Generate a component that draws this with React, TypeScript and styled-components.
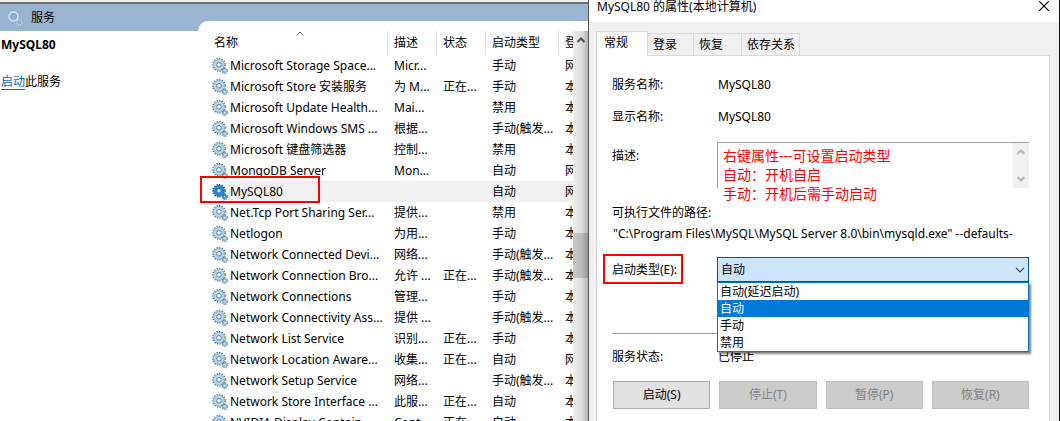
import React, { useState } from 'react';
import styled, { createGlobalStyle, css } from 'styled-components';

const GlobalStyle = createGlobalStyle`
  * { box-sizing: border-box; }
  html, body { margin: 0; height: 100%; overflow: hidden; }
  #root { height: 100%; }
  body, button, input, select, textarea, table {
    font-family: "Noto Sans", "Noto Sans CJK SC", sans-serif;
    font-size: 12px;
    line-height: 16px;
    color: #000;
  }
`;

const Desktop = styled.main`
  display: grid;
  grid-template-columns: minmax(0, 5fr) minmax(472px, 4fr);
  height: 100vh;
  overflow: hidden;
  background: #fff;
`;

/* ---------- services console ---------- */

const Console = styled.section`
  display: flex;
  flex-direction: column;
  min-width: 0;
  overflow: hidden;
  background: #fff;
`;

const ToolbarEdge = styled.div`
  flex: none;
  height: 4px;
  background: #f0f0f0;
  border-bottom: 2px solid #6e6e6e;
`;

const ConsoleBody = styled.div`
  display: grid;
  grid-template-columns: 198px minmax(0, 1fr);
  flex: 1;
  min-height: 0;
`;

const DetailPane = styled.aside`
  min-width: 0;
`;

const PaneTitle = styled.h1`
  display: flex;
  align-items: center;
  gap: 8px;
  height: 27px;
  margin: 0;
  padding-left: 7px;
  background: #99b4d1;
  font-size: 12px;
  font-weight: 400;
`;

const ServiceName = styled.h2`
  margin: 6px 0 21px;
  padding-left: 1px;
  font-size: 12px;
  font-weight: 700;
`;

const ServiceAction = styled.p`
  margin: 0;
  padding-left: 1px;
`;

const ActionLink = styled.a`
  color: #0066cc;
  text-decoration: underline;
  text-underline-offset: 3px;
`;

const ListPane = styled.div`
  display: flex;
  min-width: 0;
  min-height: 0;
  padding-top: 17px;
  background: #99b4d1;
`;

const ListSheet = styled.div`
  display: grid;
  grid-template-columns: minmax(0, 1fr) 15px;
  flex: 1;
  min-width: 0;
  padding-top: 10px;
  background: #fff;
  border-top-left-radius: 10px;
  overflow: hidden;
`;

const TableClip = styled.div`
  min-width: 0;
  padding-left: 14px;
  overflow: hidden;
`;

const ServiceTable = styled.table`
  width: 100%;
  table-layout: fixed;
  border-collapse: separate;
  border-spacing: 0;
`;

const HeadCell = styled.th<{ $first?: boolean }>`
  position: relative;
  height: 24px;
  padding: 0 0 0 ${p => (p.$first ? 2 : 6)}px;
  border-right: 1px solid #dedede;
  font-weight: 400;
  text-align: left;
  white-space: nowrap;
  overflow: hidden;
  &:last-child { border-right: 0; }
`;

const SortMark = styled.svg`
  position: absolute;
  top: 0;
  left: 50%;
  margin-left: -4px;
`;

const Row = styled.tr<{ $selected?: boolean }>`
  ${p => p.$selected && css`td { background: #f0f0f0; }`}
`;

const Cell = styled.td`
  height: 21px;
  padding: 0 0 0 6px;
  white-space: nowrap;
  overflow: hidden;
`;

const NameCell = styled(Cell)<{ $selected?: boolean }>`
  position: relative;
  padding: 0;
  overflow: visible;
  ${p => p.$selected && css`&& { background: linear-gradient(90deg, #fff 16px, #f0f0f0 16px); }`}
`;

const NameContent = styled.div`
  display: flex;
  align-items: center;
  gap: 2px;
`;

const Highlight = styled.span`
  position: absolute;
  border: 2px solid #f00;
  pointer-events: none;
`;

const RowHighlight = styled(Highlight)`
  top: -5px;
  left: -12px;
  width: 120px;
  height: 27px;
`;

const ScrollTrack = styled.div`
  display: flex;
  flex-direction: column;
  align-items: stretch;
  background: linear-gradient(90deg, #eee, #dadada 60%, #b4b4b4);
`;

const ScrollArrow = styled.span`
  display: flex;
  justify-content: center;
  height: 202px;
  padding-top: 6px;
`;

const ScrollThumb = styled.span`
  height: 45px;
  background: linear-gradient(90deg, #c8c8c8, #bababa 60%, #989898);
`;

/* ---------- properties dialog ---------- */

const Dialog = styled.section`
  display: flex;
  flex-direction: column;
  min-width: 0;
  background: #f0f0f0;
  border-left: 1px solid #555;
  border-right: 1px solid #111;
`;

const TitleBar = styled.header`
  display: flex;
  justify-content: space-between;
  align-items: flex-start;
  height: 22px;
  padding: 0 10px 0 8px;
  background: #fff;
`;

const DialogTitle = styled.h2`
  margin: -1px 0 0;
  font-size: 12px;
  font-weight: 400;
`;

const CloseButton = styled.button`
  display: flex;
  padding: 1px 0 0;
  border: 0;
  background: none;
`;

const Tabs = styled.div`
  display: flex;
  align-items: flex-end;
  height: 33px;
  padding: 9px 7px 0;
`;

const Tab = styled.button<{ $active?: boolean; $width: number }>`
  width: ${p => p.$width}px;
  height: 22px;
  padding: 0 5px;
  border: 1px solid #d9d9d9;
  border-width: 1px 1px 0 0;
  background: #f0f0f0;
  text-align: left;
  white-space: nowrap;
  ${p => p.$active && css`
    height: 25px;
    margin-bottom: -1px;
    padding: 0 7px 2px;
    border-left-width: 1px;
    background: #fff;
    z-index: 1;
  `}
`;

const TabPage = styled.form`
  flex: 1;
  min-height: 0;
  margin: 0 9px 0 7px;
  padding: 13px 20px 0 15px;
  border: 1px solid #d9d9d9;
  border-bottom: 0;
  background: #fff;
`;

const Field = styled.div<{ $height: number }>`
  display: grid;
  grid-template-columns: 105px minmax(0, 1fr);
  align-items: center;
  height: ${p => p.$height}px;
`;

const DescriptionField = styled(Field)`
  align-items: start;
  padding-top: 9px;
`;

const DescriptionLabel = styled.label`
  padding-top: 6px;
`;

const PlainInput = styled.input`
  width: 100%;
  height: 16px;
  padding: 0 0 0 1px;
  border: 0;
  outline: 0;
  background: transparent;
`;

const DescriptionBox = styled.div`
  position: relative;
  display: grid;
  grid-template-columns: minmax(0, 1fr) 16px;
  height: 46px;
  border: 1px solid #a0a0a0;
  border-width: 1px 0 0 1px;
`;

const Description = styled.textarea`
  height: 100%;
  border: 0;
  outline: 0;
  resize: none;
  background: #fff;
`;

const MiniScroll = styled.div`
  display: flex;
  flex-direction: column;
  align-items: center;
  justify-content: space-between;
  padding: 6px 0;
  background: #f0f0f0;
`;

const Note = styled.p`
  position: absolute;
  top: 3px;
  left: 5px;
  margin: 0;
  color: #f00;
  font-size: 14px;
  line-height: 19px;
  white-space: pre-line;
  pointer-events: none;
`;

const PathBlock = styled.div`
  padding-top: 16px;
`;

const PathLabel = styled.label`
  display: block;
  margin-bottom: 5px;
`;

const StartupField = styled(Field)`
  position: relative;
  margin-top: 15px;
`;

const LabelHighlight = styled(Highlight)`
  top: -3px;
  left: -9px;
  width: 80px;
  height: 30px;
`;

const Combo = styled.div`
  position: relative;
  display: flex;
  align-items: center;
`;

const StartupSelect = styled.select`
  width: 100%;
  height: 25px;
  padding: 0 3px;
  appearance: none;
  border: 1px solid #005499;
  border-radius: 0;
  outline: 0;
  background: #cce4f7;
`;

const ComboArrow = styled.svg`
  position: absolute;
  right: 4px;
  pointer-events: none;
`;

const Options = styled.ul`
  position: absolute;
  z-index: 2;
  top: 25px;
  left: 0;
  right: 0;
  margin: 0;
  padding: 0;
  border: 1px solid #0078d7;
  background: #fff;
  box-shadow: 2px 2px 2px rgba(0, 0, 0, 0.5);
  list-style: none;
`;

const Option = styled.li<{ $selected: boolean }>`
  height: 17px;
  padding: 1px 0 0 2px;
  color: ${p => (p.$selected ? '#fff' : '#000')};
  background: ${p => (p.$selected ? '#0078d7' : '#fff')};
`;

const Divider = styled.hr`
  height: 1px;
  margin: 51px 0 15px;
  border: 0;
  background: #a0a0a0;
`;

const ButtonRow = styled.div`
  display: grid;
  grid-template-columns: repeat(4, minmax(0, 1fr));
  gap: 9px;
  padding: 16px 0 0 1px;
`;

const CommandButton = styled.button`
  height: 28px;
  padding: 0;
  border: 1px solid #adadad;
  background: #e1e1e1;
  &:disabled {
    border-color: #bfbfbf;
    background: #ccc;
    color: #838383;
  }
`;

/* ---------- drawings ---------- */

const GearIcon = ({ dark }: { dark?: boolean }) => (
  <svg width="16" height="16" viewBox="0 0 16 16" fill="none" aria-hidden="true">
    <circle cx="7" cy="6.8" r="6.1" stroke={dark ? '#1767a8' : '#55758f'} strokeWidth="1.6" strokeDasharray="1.3 1.25" />
    <circle cx="7" cy="6.8" r="4" stroke={dark ? '#2e8ad0' : '#b5d8ef'} strokeWidth="3.2" />
    <circle cx="7" cy="6.8" r="5.3" stroke={dark ? '#1f74b8' : '#7fa6c2'} strokeWidth="0.7" />
    <circle cx="7" cy="6.8" r="2.3" fill={dark ? '#d9ecfa' : '#fff'} stroke={dark ? '#155d99' : '#54789a'} strokeWidth="1" />
    <circle cx="12.8" cy="12.8" r="2.6" stroke={dark ? '#1767a8' : '#55758f'} strokeWidth="1.2" strokeDasharray="1.1 0.94" />
    <circle cx="12.8" cy="12.8" r="1.5" fill="#fff" stroke={dark ? '#2e8ad0' : '#8fb8d6'} strokeWidth="1.6" />
  </svg>
);

const TitleGear = () => (
  <svg width="16" height="16" viewBox="0 0 16 16" fill="none" aria-hidden="true">
    <circle cx="6.5" cy="6.5" r="5.6" stroke="#89a9bd" strokeWidth="1.4" strokeDasharray="1.4 1.53" />
    <circle cx="6.5" cy="6.5" r="4.4" stroke="#c4e3f2" strokeWidth="2" />
    <circle cx="6.5" cy="6.5" r="3.1" fill="#92b1d3" stroke="#7ea0b8" strokeWidth="0.6" />
    <circle cx="12.5" cy="12.5" r="2.4" stroke="#bcdcea" strokeWidth="1.6" strokeDasharray="1.1 0.78" />
    <circle cx="12.5" cy="12.5" r="1.4" stroke="#86a9c0" strokeWidth="0.8" />
  </svg>
);

const Chevron = ({ up, color, weight = 1 }: { up?: boolean; color: string; weight?: number }) => (
  <svg width="10" height="6" viewBox="0 0 10 6" fill="none" aria-hidden="true">
    <path d={up ? 'M1.5 5 5 1.5 8.5 5' : 'M1.5 1 5 4.5 8.5 1'} stroke={color} strokeWidth={weight} />
  </svg>
);

/* ---------- data ---------- */

const services: string[][] = [
  ['Microsoft Storage Space...', 'Micr...', '', '手动', '网'],
  ['Microsoft Store 安装服务', '为 M...', '正在...', '手动', '本'],
  ['Microsoft Update Health...', 'Mai...', '', '禁用', '本'],
  ['Microsoft Windows SMS ...', '根据...', '', '手动(触发...', '本'],
  ['Microsoft 键盘筛选器', '控制...', '', '禁用', '本'],
  ['MongoDB Server', 'Mon...', '', '自动', '网'],
  ['MySQL80', '', '', '自动', '网'],
  ['Net.Tcp Port Sharing Ser...', '提供...', '', '禁用', '本'],
  ['Netlogon', '为用...', '', '手动', '本'],
  ['Network Connected Devi...', '网络...', '', '手动(触发...', '本'],
  ['Network Connection Bro...', '允许 ...', '正在...', '手动(触发...', '本'],
  ['Network Connections', '管理...', '', '手动', '本'],
  ['Network Connectivity Ass...', '提供 ...', '', '手动(触发...', '本'],
  ['Network List Service', '识别...', '正在...', '手动', '本'],
  ['Network Location Aware...', '收集...', '正在...', '自动', '网'],
  ['Network Setup Service', '网络...', '', '手动(触发...', '本'],
  ['Network Store Interface ...', '此服...', '正在...', '自动', '本'],
  ['NVIDIA Display Contain...', 'Cont...', '正在...', '自动', '本'],
];

const startupTypes = ['自动(延迟启动)', '自动', '手动', '禁用'];
const selectedService = 'MySQL80';

export default function App() {
  const [startup, setStartup] = useState('自动');

  return (
    <>
      <GlobalStyle />
      <Desktop>
        <Console>
          <ToolbarEdge />
          <ConsoleBody>
            <DetailPane>
              <PaneTitle><TitleGear />服务</PaneTitle>
              <ServiceName>{selectedService}</ServiceName>
              <ServiceAction><ActionLink href="#start">启动</ActionLink>此服务</ServiceAction>
            </DetailPane>
            <ListPane>
              <ListSheet>
                <TableClip>
                  <ServiceTable>
                    <colgroup>
                      <col />
                      <col width="49" />
                      <col width="49" />
                      <col width="73" />
                      <col width="14" />
                    </colgroup>
                    <thead>
                      <tr>
                        <HeadCell $first>
                          名称
                          <SortMark width="8" height="5" viewBox="0 0 8 5" fill="none" aria-hidden="true">
                            <path d="M.5 4.5 4 1l3.5 3.5" stroke="#555" />
                          </SortMark>
                        </HeadCell>
                        <HeadCell>描述</HeadCell>
                        <HeadCell>状态</HeadCell>
                        <HeadCell>启动类型</HeadCell>
                        <HeadCell>登</HeadCell>
                      </tr>
                    </thead>
                    <tbody>
                      {services.map(([name, ...rest]) => {
                        const selected = name === selectedService;
                        return (
                          <Row key={name} $selected={selected}>
                            <NameCell $selected={selected}>
                              <NameContent><GearIcon dark={selected} />{name}</NameContent>
                              {selected && <RowHighlight />}
                            </NameCell>
                            {rest.map((text, i) => <Cell key={i}>{text}</Cell>)}
                          </Row>
                        );
                      })}
                    </tbody>
                  </ServiceTable>
                </TableClip>
                <ScrollTrack>
                  <ScrollArrow><Chevron up color="#505050" weight={2} /></ScrollArrow>
                  <ScrollThumb />
                </ScrollTrack>
              </ListSheet>
            </ListPane>
          </ConsoleBody>
        </Console>

        <Dialog role="dialog" aria-labelledby="dialog-title">
          <TitleBar>
            <DialogTitle id="dialog-title">MySQL80 的属性(本地计算机)</DialogTitle>
            <CloseButton type="button" aria-label="关闭">
              <svg width="10" height="10" viewBox="0 0 10 10" aria-hidden="true">
                <path d="M0 0l10 10M10 0L0 10" stroke="#000" strokeWidth="1.1" />
              </svg>
            </CloseButton>
          </TitleBar>
          <Tabs role="tablist">
            <Tab type="button" role="tab" aria-selected $active $width={52}>常规</Tab>
            <Tab type="button" role="tab" $width={46}>登录</Tab>
            <Tab type="button" role="tab" $width={48}>恢复</Tab>
            <Tab type="button" role="tab" $width={58}>依存关系</Tab>
          </Tabs>
          <TabPage onSubmit={e => e.preventDefault()}>
            <Field $height={32}>
              <label htmlFor="service-name">服务名称:</label>
              <PlainInput id="service-name" readOnly value="MySQL80" />
            </Field>
            <Field $height={32}>
              <label htmlFor="display-name">显示名称:</label>
              <PlainInput id="display-name" readOnly value="MySQL80" />
            </Field>
            <DescriptionField $height={56}>
              <DescriptionLabel htmlFor="description">描述:</DescriptionLabel>
              <DescriptionBox>
                <Description id="description" readOnly value="" />
                <MiniScroll>
                  <Chevron up color="#b8b8b8" weight={2} />
                  <Chevron color="#b8b8b8" weight={2} />
                </MiniScroll>
                <Note>{'右键属性---可设置启动类型\n自动：开机自启\n手动：开机后需手动启动'}</Note>
              </DescriptionBox>
            </DescriptionField>
            <PathBlock>
              <PathLabel htmlFor="path">可执行文件的路径:</PathLabel>
              <PlainInput
                id="path"
                readOnly
                value={'"C:\\Program Files\\MySQL\\MySQL Server 8.0\\bin\\mysqld.exe" --defaults-'}
              />
            </PathBlock>
            <StartupField $height={25}>
              <label htmlFor="startup">启动类型(E):</label>
              <LabelHighlight />
              <Combo>
                <StartupSelect id="startup" value={startup} onChange={e => setStartup(e.target.value)}>
                  {startupTypes.map(type => <option key={type}>{type}</option>)}
                </StartupSelect>
                <ComboArrow width="10" height="6" viewBox="0 0 10 6" fill="none" aria-hidden="true">
                  <path d="M1 .8 5 4.8 9 .8" stroke="#444" strokeWidth="1.2" />
                </ComboArrow>
                <Options role="listbox" aria-label="启动类型">
                  {startupTypes.map(type => (
                    <Option
                      key={type}
                      role="option"
                      aria-selected={type === startup}
                      $selected={type === startup}
                      onClick={() => setStartup(type)}
                    >
                      {type}
                    </Option>
                  ))}
                </Options>
              </Combo>
            </StartupField>
            <Divider />
            <Field $height={16}>
              <label htmlFor="status">服务状态:</label>
              <PlainInput id="status" readOnly value="已停止" />
            </Field>
            <ButtonRow>
              <CommandButton type="button">启动(S)</CommandButton>
              <CommandButton type="button" disabled>停止(T)</CommandButton>
              <CommandButton type="button" disabled>暂停(P)</CommandButton>
              <CommandButton type="button" disabled>恢复(R)</CommandButton>
            </ButtonRow>
          </TabPage>
        </Dialog>
      </Desktop>
    </>
  );
}
